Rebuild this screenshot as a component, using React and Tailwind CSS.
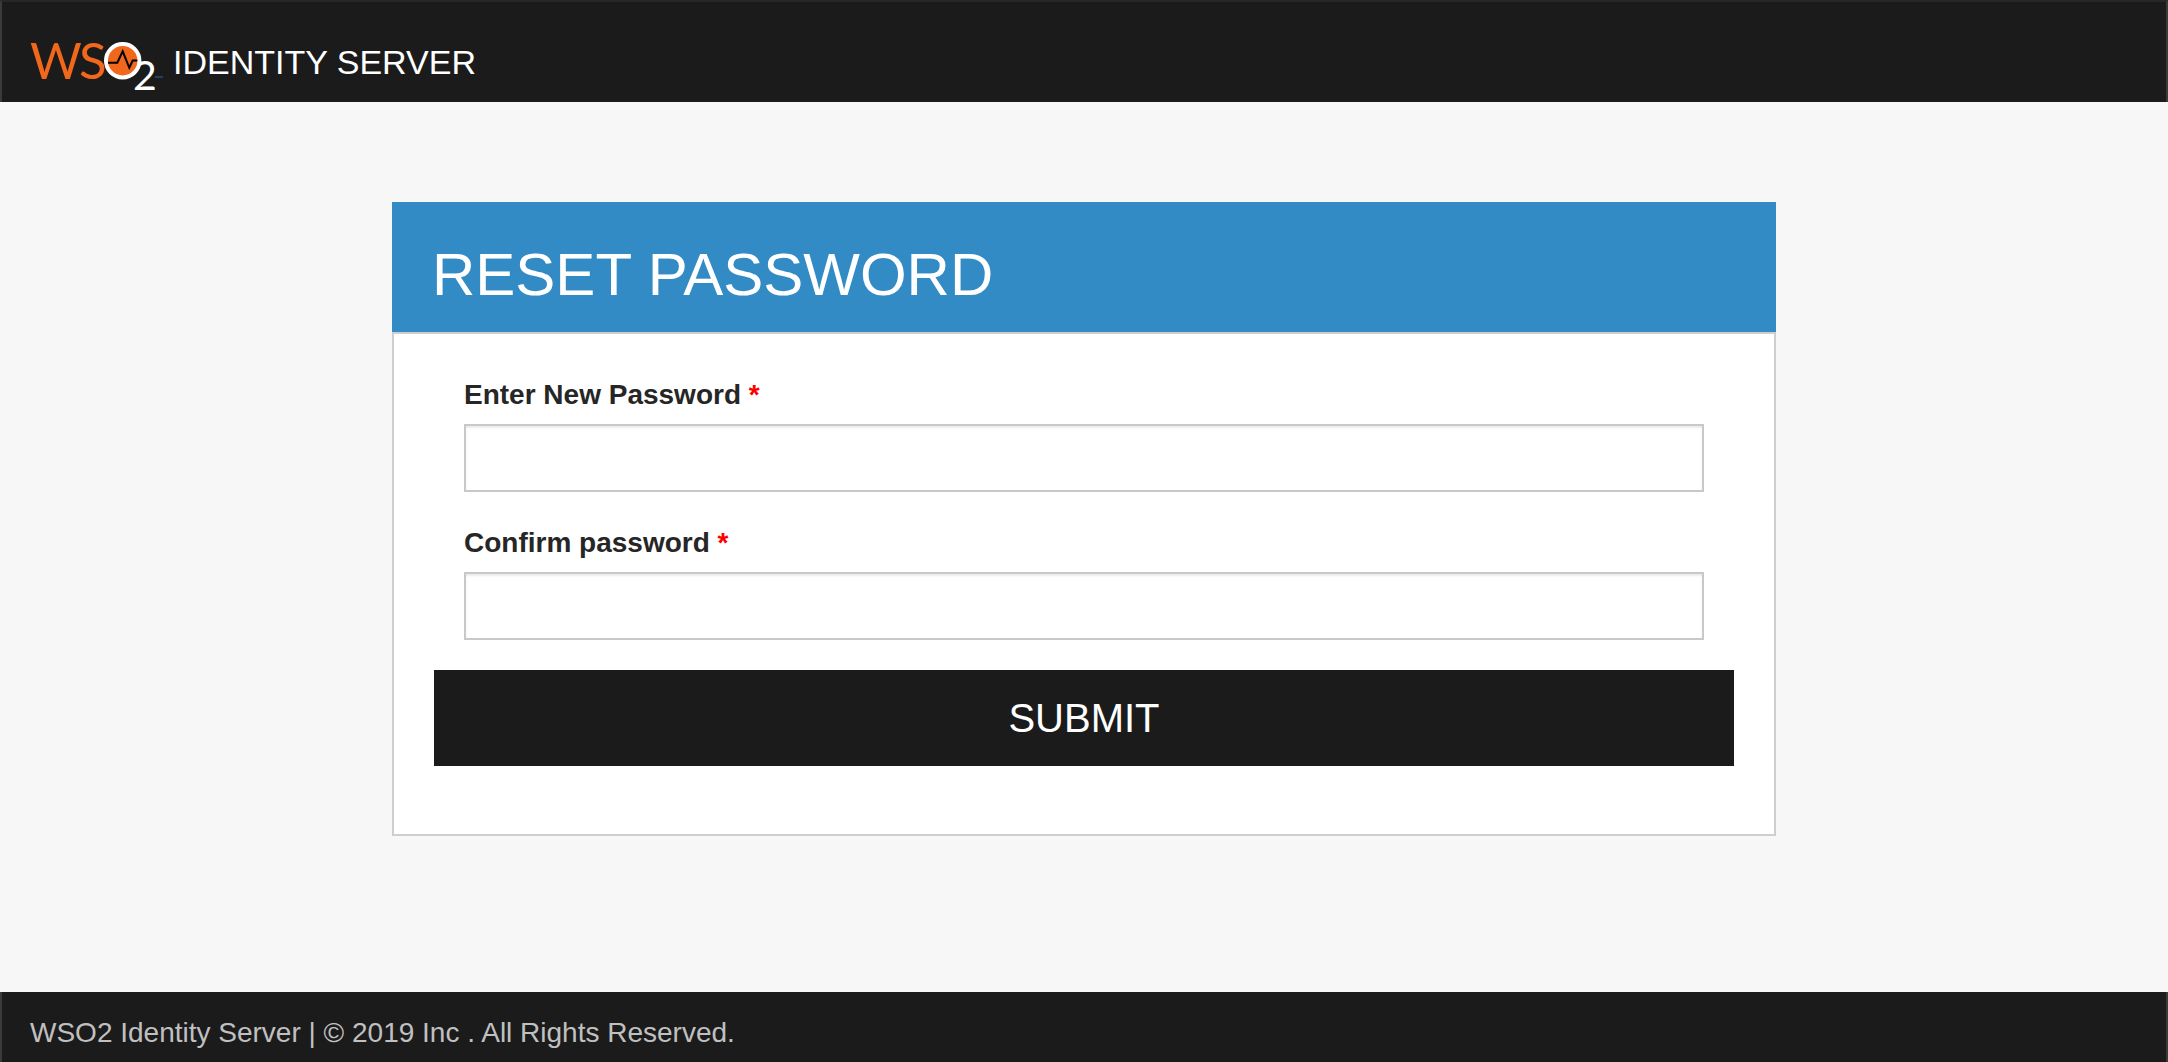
function Logo() {
  return (
    <svg
      role="img"
      aria-label="WSO2"
      className="h-[76px] w-[134px] shrink-0 overflow-visible"
      viewBox="0 -14 134 76"
      fontFamily="Lato, sans-serif"
    >
      <text x="0" y="39" fontSize="50" fill="#f1671c">W</text>
      <text x="49" y="39" fontSize="51" fill="#f1671c">S</text>
      <text x="103" y="50" fontSize="41" fill="#ffffff">2</text>
      <circle cx="92.7" cy="20.7" r="16.7" fill="#f1671c" stroke="#ffffff" strokeWidth="4" />
      <path d="M78 22.7h9.3l5.4-11.4 6.6 16.5 3.4-7.2h4.6" fill="none" stroke="#000000" strokeWidth="2" />
      <path d="M125 37h8" stroke="#20416d" strokeWidth="2" />
    </svg>
  );
}

function PasswordField({ id, label }) {
  return (
    <div className="px-[30px]">
      <label htmlFor={id} className="block text-[28px] leading-[42px] font-bold text-[#262626]">
        {label} <span className="text-[#ff0000]">*</span>
      </label>
      <input
        id={id}
        type="password"
        required
        className="mt-2 block h-[68px] w-full border-2 border-[#c8c8c8] bg-white px-4 text-[28px] shadow-[inset_0_2px_2px_rgba(0,0,0,0.08)] outline-none"
      />
    </div>
  );
}

export default function App() {
  return (
    <div className="flex min-h-screen flex-col bg-[#f7f7f7] font-['Liberation_Sans',Arial,sans-serif]">
      <header className="flex items-start gap-[9px] border-x-2 border-t-2 border-x-[#3a3a3a] border-t-[#24282b] bg-[#1b1b1b] px-7 pt-6">
        <Logo />
        <p className="mt-4 text-[34px] leading-10 text-white">IDENTITY SERVER</p>
      </header>

      <main className="flex-1 px-8 pt-[100px] pb-[156px]">
        <section className="mx-auto w-full max-w-[1384px]">
          <h1 className="bg-[#328bc5] px-10 pt-[37px] pb-[21px] text-[60px] leading-[72px] text-white">
            RESET PASSWORD
          </h1>
          <form
            className="flex flex-col gap-[30px] border-2 border-[#cecece] bg-white px-10 pt-10 pb-[68px]"
            onSubmit={(event) => event.preventDefault()}
          >
            <PasswordField id="new-password" label="Enter New Password" />
            <PasswordField id="confirm-password" label="Confirm password" />
            <button type="submit" className="h-24 w-full bg-[#1b1b1b] text-[40px] text-white">
              SUBMIT
            </button>
          </form>
        </section>
      </main>

      <footer className="border-x-2 border-x-[#3a3a3a] bg-[#1b1b1b] px-7 pt-5 pb-2">
        <p className="text-[28px] leading-[42px] text-[#c0c0c0]">
          WSO2 Identity Server | © 2019 Inc . All Rights Reserved.
        </p>
      </footer>
    </div>
  );
}
